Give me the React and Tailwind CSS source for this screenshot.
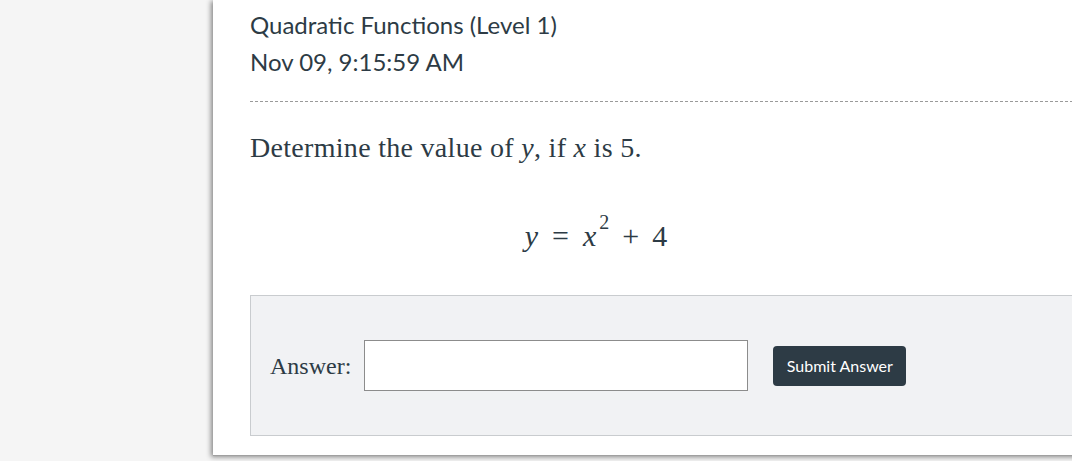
export default function App() {
  return (
    <div className="w-[1072px] h-[461px] overflow-hidden bg-[#f5f5f5] flex">
      <div className="w-[213px] shrink-0" />
      <div className="shrink-0 w-[900px] h-[456px] bg-white shadow-[-2px_1px_5px_rgba(0,0,0,0.45)] border-b border-[#a0a0a0] pl-[37px] pt-[6px] text-[#2d3b45]">
        <div className="font-['Lato',sans-serif] text-[24px] leading-[37px]">
          <div>Quadratic Functions (Level 1)</div>
          <div>Nov 09, 9:15:59 AM</div>
        </div>
        <div className="mt-[21px] border-t border-dashed border-[#9a9a9a]" />
        <div className="mt-[26px] font-['Liberation_Serif',serif] text-[28px] tracking-[0.3px] leading-[40px]">
          Determine the value of <span className="italic">y</span>, if <span className="italic">x</span> is 5.
        </div>
        <div className="mt-[48px] w-[692px] text-center font-['Liberation_Serif',serif] text-[30px] leading-[40px] whitespace-nowrap">
          <span className="italic">y</span>
          <span className="inline-block mx-[14px]">=</span>
          <span className="italic">x</span>
          <span className="inline-block align-top text-[20px] leading-[20px] ml-[3px] mt-[-4px]">2</span>
          <span className="inline-block mx-[13px]">+</span>
          <span>4</span>
        </div>
        <div className="mt-[39px] h-[141px] bg-[#f1f2f4] border border-[#c9cccf] flex items-center pl-[19px]">
          <span className="font-['Liberation_Serif',serif] text-[24px]">Answer:</span>
          <input type="text" className="ml-[13px] w-[384px] h-[51px] bg-white border border-[#8c8c8c] outline-none" />
          <button className="ml-[25px] w-[133px] h-[40px] bg-[#2d3b45] rounded-[4px] text-white font-['Lato',sans-serif] text-[16px]">
            Submit Answer
          </button>
        </div>
      </div>
    </div>
  );
}
